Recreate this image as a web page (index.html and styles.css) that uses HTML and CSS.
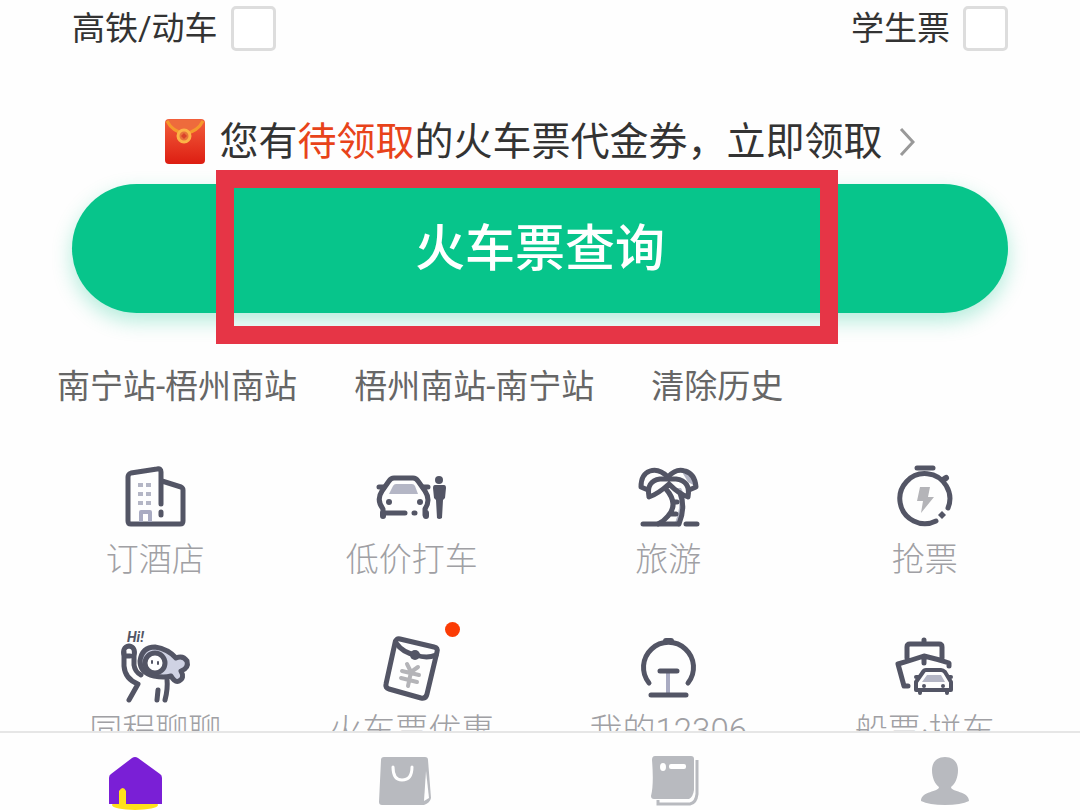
FILE: index.html
```html
<!DOCTYPE html>
<html lang="zh-CN">

<head>
    <meta charset="UTF-8">
    <meta name="viewport" content="width=device-width, initial-scale=1.0">
    <title>火车票查询</title>
    <link rel="stylesheet" href="styles.css">
</head>

<body>
    <main class="content">
        <div class="options">
            <label class="option">高铁/动车 <input type="checkbox" name="highspeed"></label>
            <label class="option">学生票 <input type="checkbox" name="student"></label>
        </div>

        <a class="coupon" href="#">
            <svg class="packet" viewBox="0 0 40 46">
                <defs>
                    <linearGradient id="packetRed" x1="0" y1="0" x2="0" y2="1">
                        <stop offset="0" stop-color="#f2603c"/>
                        <stop offset="1" stop-color="#dd1d12"/>
                    </linearGradient>
                </defs>
                <rect x="0" y="0" width="40" height="45" rx="4" fill="url(#packetRed)"/>
                <path d="M2 1 Q7 12 20 16 Q33 12 38 1 Z" fill="#ee6b3c"/>
                <path d="M2 2 Q7 12 20 15 Q33 12 38 2" fill="none" stroke="#f59a2c" stroke-width="3"/>
                <circle cx="19" cy="17" r="6" fill="#e8743a" stroke="#fcb447" stroke-width="3"/>
                <path d="M19 14 L22 17 L19 20 L16 17 Z" fill="#d9432a"/>
            </svg>
            <span class="coupon-text">您有<em>待领取</em>的火车票代金券&#xFF0C;立即领取</span>
            <svg class="arrow" viewBox="0 0 16 30">
                <path d="M2 2 L14 15 L2 28" fill="none" stroke="#999" stroke-width="3"/>
            </svg>
        </a>

        <div class="search">
            <button class="search-btn" type="button">火车票查询</button>
            <div class="mark"></div>
        </div>

        <div class="history">
            <a href="#">南宁站-梧州南站</a>
            <a href="#">梧州南站-南宁站</a>
            <button type="button">清除历史</button>
        </div>

        <div class="services">
            <a class="service" href="#">
                <svg class="icon" viewBox="0 0 80 70">
                    <path d="M46 42 V10 Q46 6 42 7 L16 11 Q13 12 13 15 V59 Q13 62 16 62 H65 Q68 62 68 59 V28 Q68 26 66 25 L47 19 M46 50 V53"/>
                    <path class="tint-fill" d="M23 21h5v4h-5z M31 21h5v4h-5z M23 30h5v4h-5z M31 30h5v4h-5z M23 39h5v4h-5z M31 39h5v4h-5z"/>
                    <path class="tint" d="M26 60 V50 H35 V60"/>
                </svg>
                <span>订酒店</span>
            </a>
            <a class="service" href="#">
                <svg class="icon" viewBox="0 0 80 70">
                    <path class="tint-fill" d="M24 22 H40 Q42 22 43 24 L46 32 H17 L21 24 Q22 22 24 22 Z"/>
                    <path d="M11 53 V47 Q4 38 10 29 L17 19 Q19 16 22 16 H41 Q44 16 46 19 L53 29 Q59 38 53 47 V53"/>
                    <path d="M7 25 H12 M51 25 H56 M12 51 H33 M42 51 H43"/>
                    <path d="M11 51 V54 M54 51 V54" stroke-width="6"/>
                    <circle class="dark-fill" cx="17" cy="40" r="3"/>
                    <circle class="dark-fill" cx="48" cy="40" r="3"/>
                    <circle class="dark-fill" cx="67" cy="18" r="4"/>
                    <path class="dark-fill" d="M63 23 H72 Q74 23 74 26 L73 36 L71 38 L70 56 Q67 58 65 56 L64 38 L62 36 L61 26 Q61 23 63 23 Z"/>
                </svg>
                <span>低价打车</span>
            </a>
            <a class="service" href="#">
                <svg class="icon" viewBox="0 0 80 70">
                    <path class="tint-fill" d="M48 26 Q55 42 47 61 H52 Q61 40 53 26 Z M54 10 Q64 12 67 24 L60 20 Z"/>
                    <path d="M20 28 L13 25 Q13 12 22 9 Q31 6 40 15 Q48 6 57 9 Q67 12 68 25 L61 28"/>
                    <path d="M21 35 Q18 19 32 17 H48 Q63 19 60 35 Q51 32 41 22 Q30 32 21 35 Z"/>
                    <path d="M38 27 Q51 42 40 54 Q36 59 30 62 M52 31 Q58 45 51 62 M45 40 H49 M43 52 H48"/>
                    <path d="M15 62 H50 M58 62 H69"/>
                </svg>
                <span>旅游</span>
            </a>
            <a class="service" href="#">
                <svg class="icon" viewBox="0 0 80 70">
                    <path d="M32 6 H48"/>
                    <path d="M51 59 A25 25 0 1 1 63 46"/>
                    <path d="M58 18 L61 16" stroke-width="6"/>
                    <path class="dark-fill" d="M57 49 L61 53 L57 57 L53 53 Z"/>
                    <path class="gray-fill" d="M35 25 H45 L43 35 H49 L36 51 L38 39 H32 Z"/>
                </svg>
                <span>抢票</span>
            </a>
            <a class="service" href="#">
                <svg class="icon" viewBox="0 0 80 70">
                    <text class="hi" x="12" y="9">Hi!</text>
                    <path d="M9 23 Q7 14 14 13 Q21 14 19 23 V32 Q20 39 26 42 M9 19 V33 Q10 46 23 51 L14 67 M10 23 H15"/>
                    <path d="M25 28 Q27 14 40 14 Q53 16 61 25 Q68 22 72 28 Q74 35 66 38 Q70 45 64 48 Q60 50 56 43 Q49 45 39 43 Q25 40 25 28 Z" fill="#cfd2e3"/>
                    <circle cx="40" cy="30" r="10" fill="#fff"/>
                    <path d="M37 28 V30 M43 29 V31" stroke-width="2"/>
                    <path d="M52 46 Q53 56 50 67 M43 57 L42 67"/>
                </svg>
                <span>同程聊聊</span>
            </a>
            <a class="service" href="#">
                <svg class="icon" viewBox="0 0 80 70">
                    <path d="M28 6 L62 14 Q66 15 65 19 L55 61 Q54 66 49 65 L17 56 Q13 55 14 51 L23 10 Q24 5 28 6 Z"/>
                    <path d="M24 10 Q31 20 44 22 Q55 26 64 22"/>
                    <circle class="dark-fill" cx="43" cy="22" r="5"/>
                    <path class="gray" d="M35 31 L39 39 L46 34 M30 38 L47 42 M29 45 L45 49 M39 39 L36 53"/>
                </svg>
                <i class="dot"></i>
                <span>火车票优惠</span>
            </a>
            <a class="service" href="#">
                <svg class="icon" viewBox="0 0 80 70">
                    <path class="tint" d="M40 38 V62"/>
                    <path d="M21 50 A25 25 0 1 1 60 50"/>
                    <path d="M38 8 H43" stroke-width="6"/>
                    <path d="M32 38 H49 M23 62 H58"/>
                </svg>
                <span>我的12306</span>
            </a>
            <a class="service" href="#">
                <svg class="icon" viewBox="0 0 80 70">
                    <path d="M39 7 V11 M22 25 V14 Q22 11 25 11 H54 Q57 11 57 14 V25 M23 53 H19 L13 31 Q27 27 39 23 Q52 26 64 30 V33 M39 23 V30"/>
                    <path class="tint-fill" d="M42 42 H56 L60 49 H37 Z"/>
                    <path d="M31 57 V49 L38 39 Q39 37 41 37 H56 Q58 37 60 39 L66 49 V57 Z M31 44 H33 M64 44 H66 M35 58 V60 M62 58 V60" stroke-width="4"/>
                    <circle class="dark-fill" cx="39" cy="53" r="2"/>
                    <circle class="dark-fill" cx="58" cy="53" r="2"/>
                </svg>
                <span>船票·拼车</span>
            </a>
        </div>
    </main>

    <nav class="tabbar">
        <a href="#" aria-label="首页">
            <svg viewBox="0 0 60 56">
                <ellipse cx="30" cy="50" rx="23" ry="5" fill="#ffe11a"/>
                <path d="M27 3 Q30 1 33 3 L55 19 Q57 20 57 23 V49 H4 V23 Q4 20 6 19 Z" fill="#7a1fd6"/>
                <path d="M14 51 V36 Q18 30 21 36 V51 Z" fill="#ffe11a"/>
            </svg>
        </a>
        <a href="#" aria-label="订单">
            <svg viewBox="0 0 60 56">
                <path d="M9 2 H50 Q53 2 53 5 L56 43 Q55 48 49 50 H7 Q4 50 4 47 L6 5 Q6 2 9 2 Z" fill="#b8babf"/>
                <path d="M51 16 L54 43 L49 46 Z" fill="#fff"/>
                <path d="M18 12 Q18 25 27 25 Q37 25 37 12" fill="none" stroke="#fff" stroke-width="3" stroke-linecap="round"/>
            </svg>
        </a>
        <a href="#" aria-label="行程">
            <svg viewBox="0 0 60 56">
                <path d="M52 5 V39 Q51 48 45 49 H13 V45" fill="none" stroke="#b8babf" stroke-width="3"/>
                <path d="M10 1 H46 Q49 1 49 4 V35 Q48 42 44 44 H9 Q6 44 6 41 Q9 30 7 5 Q7 1 10 1 Z" fill="#b8babf"/>
                <ellipse cx="18" cy="12" rx="3" ry="4" fill="#fff"/>
                <rect x="24" y="9" width="17" height="5" rx="2" fill="#fff"/>
            </svg>
        </a>
        <a href="#" aria-label="我的">
            <svg viewBox="0 0 60 56">
                <path d="M30 2 C39 2 43 8 43 15 C43 23 40 29 36 32 C36 37 54 36 54 46 Q46 50 30 50 Q14 50 6 46 C6 36 24 37 24 32 C20 29 17 23 17 15 C17 8 21 2 30 2 Z" fill="#b8babf"/>
            </svg>
        </a>
    </nav>
</body>

</html>
```
FILE: styles.css
```css
* {
    margin: 0;
    padding: 0;
    box-sizing: border-box;
}
body {
    display: flex;
    flex-direction: column;
    height: 100vh;
    background-color: #fefefe;
    color: #333;
    font-family: Roboto, "Noto Sans CJK SC", sans-serif;
}
a {
    color: inherit;
    text-decoration: none;
}
button {
    border: none;
    background: none;
    color: inherit;
    font: inherit;
    cursor: pointer;
}
.content {
    flex: 1;
    min-height: 0;
    overflow: hidden;
}

/* ticket options */
.options {
    display: flex;
    justify-content: space-between;
    padding: 6px 72px 0;
}
.option {
    display: flex;
    align-items: center;
    gap: 13px;
    font-size: 33px;
    line-height: 44px;
}
.option input {
    appearance: none;
    width: 45px;
    height: 45px;
    border: 3px solid #ddd;
    border-radius: 5px;
    background-color: #fff;
}

/* coupon line */
.coupon {
    display: flex;
    justify-content: center;
    align-items: center;
    margin-top: 63px;
    font-size: 39px;
    line-height: 56px;
}
.coupon em {
    color: #e8431a;
    font-style: normal;
}
.packet {
    width: 40px;
    height: 46px;
    margin-right: 14px;
}
.arrow {
    width: 16px;
    height: 30px;
    margin-left: 16px;
}

/* search button */
.search {
    position: relative;
    margin: 14px 72px 0;
}
.search-btn {
    display: block;
    width: 100%;
    height: 129px;
    padding-bottom: 10px;
    border-radius: 65px;
    background-color: #07c58b;
    box-shadow: 0 8px 20px rgba(7, 197, 139, 0.3);
    color: #fff;
    font-size: 50px;
    font-weight: 500;
}
.mark {
    position: absolute;
    top: -14px;
    right: 170px;
    bottom: -31px;
    left: 144px;
    border: 18px solid #e63546;
    pointer-events: none;
}

.history {
    display: flex;
    gap: 57px;
    padding: 50px 57px 0;
    color: #666;
    font-size: 33px;
    line-height: 48px;
}

/* service grid */
.services {
    display: grid;
    grid-template-columns: repeat(4, 1fr);
    row-gap: 51px;
    padding: 51px 27px 0;
}
.service {
    position: relative;
    display: flex;
    flex-direction: column;
    align-items: center;
    gap: 6px;
    color: #a0a0a4;
    font-size: 33px;
    font-weight: 300;
    line-height: 44px;
    white-space: nowrap;
}
.icon {
    width: 80px;
    height: 70px;
    overflow: visible;
    fill: none;
    stroke: #535565;
    stroke-width: 5px;
    stroke-linecap: round;
    stroke-linejoin: round;
}
.icon [stroke-width="2"] {
    stroke-width: 2px;
}
.icon [stroke-width="4"] {
    stroke-width: 4px;
}
.icon [stroke-width="6"] {
    stroke-width: 6px;
}
.icon .tint {
    stroke: #a9abc2;
    stroke-width: 4px;
    stroke-linecap: butt;
}
.icon .gray {
    stroke: #b4b4b8;
    stroke-width: 4px;
}
.icon .tint-fill {
    fill: #b4b6c5;
    stroke: none;
}
.icon .gray-fill {
    fill: #b4b4b8;
    stroke: none;
}
.icon .dark-fill {
    fill: #535565;
    stroke: none;
}
.icon .hi {
    fill: #535565;
    stroke: none;
    font-size: 14px;
    font-style: italic;
    font-weight: 700;
}
.dot {
    position: absolute;
    top: -11px;
    left: calc(50% + 33px);
    width: 15px;
    height: 15px;
    border-radius: 50%;
    background-color: #fb3c05;
}

/* bottom tabs */
.tabbar {
    display: flex;
    height: 79px;
    padding-top: 22px;
    border-top: 2px solid #e6e6e6;
    background-color: #fefefe;
}
.tabbar a {
    flex: 1;
    text-align: center;
}
.tabbar svg {
    width: 60px;
    height: 56px;
}
```
